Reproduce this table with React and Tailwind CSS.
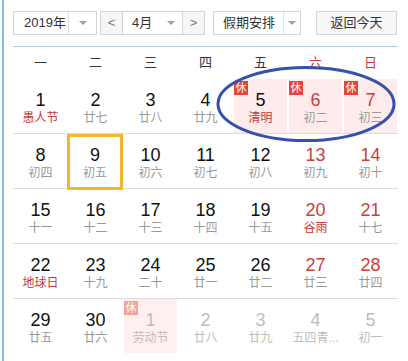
import React from 'react';

const RED = 'text-[#cc3d3d]';

// [day, lunar, flags]
const rows = [
  [
    [1, '愚人节', { lunarRed: true }],
    [2, '廿七'],
    [3, '廿八'],
    [4, '廿九'],
    [5, '清明', { rest: true, lunarRed: true }],
    [6, '初二', { rest: true, weekend: true }],
    [7, '初三', { rest: true, weekend: true }],
  ],
  [
    [8, '初四'],
    [9, '初五', { today: true }],
    [10, '初六'],
    [11, '初七'],
    [12, '初八'],
    [13, '初九', { weekend: true }],
    [14, '初十', { weekend: true }],
  ],
  [
    [15, '十一'],
    [16, '十二'],
    [17, '十三'],
    [18, '十四'],
    [19, '十五'],
    [20, '谷雨', { weekend: true, lunarRed: true }],
    [21, '十七', { weekend: true }],
  ],
  [
    [22, '地球日', { lunarRed: true }],
    [23, '十九'],
    [24, '二十'],
    [25, '廿一'],
    [26, '廿二'],
    [27, '廿三', { weekend: true }],
    [28, '廿四', { weekend: true }],
  ],
  [
    [29, '廿五'],
    [30, '廿六'],
    [1, '劳动节', { rest: true, other: true }],
    [2, '廿八', { other: true }],
    [3, '廿九', { other: true }],
    [4, '五四青...', { other: true }],
    [5, '初一', { other: true }],
  ],
];

const weekdays = ['一', '二', '三', '四', '五', '六', '日'];

const Caret = () => (
  <span className="w-0 h-0 border-l-[4px] border-r-[4px] border-t-[4px] border-l-transparent border-r-transparent border-t-[#a0a0a0]" />
);

const DayCell = ({ day, lunar, flags = {} }) => {
  const { rest, weekend, lunarRed, today, other } = flags;

  let numColor = 'text-[#111]';
  if (weekend) numColor = RED;
  if (other) numColor = 'text-[#bdbdbd]';

  let lunarColor = 'text-[#999]';
  if (lunarRed) lunarColor = 'text-[#c23a3a]';
  if (other) lunarColor = 'text-[#bdbdbd]';

  if (today) {
    return (
      <div className="relative z-10 w-[56px] h-[56px] -ml-[1px] border-[3px] border-[#f2b630] flex flex-col items-center pt-[8px]">
        <span className={`text-[18px] leading-[20px] ${numColor}`}>{day}</span>
        <span className={`text-[12px] leading-[16px] ${lunarColor}`}>{lunar}</span>
      </div>
    );
  }

  return (
    <div className="relative w-[55px] h-[54px] flex">
      <div
        className={`relative flex-1 flex flex-col items-center pt-[11px] ${
          rest ? (other ? 'bg-[#fdf0ee] mx-[1px]' : 'bg-[#fdeceb] mx-[1px]') : ''
        }`}
      >
        {rest && (
          <span
            className={`absolute top-[2px] left-0 w-[14px] h-[14px] flex items-center justify-center text-[11px] leading-none text-white ${
              other ? 'bg-[#f2a59d]' : 'bg-[#e5463a]'
            }`}
          >
            休
          </span>
        )}
        <span className={`text-[18px] leading-[20px] ${numColor}`}>{day}</span>
        <span className={`text-[12px] leading-[16px] whitespace-nowrap ${lunarColor}`}>{lunar}</span>
      </div>
    </div>
  );
};

export default function App() {
  return (
    <div
      className="relative w-[408px] h-[361px] bg-white overflow-hidden flex"
      style={{ fontFamily: '"Liberation Sans", "Noto Sans CJK SC", sans-serif' }}
    >
      <div className="ml-[2px] w-[2px] bg-[#86bcdc] self-stretch" />

      <div className="pl-[9px] flex flex-col">
        {/* controls */}
        <div className="mt-[11px] h-[24px] flex text-[13px] text-[#333]">
          <div className="w-[84px] flex border border-[#d4d4d4] bg-white">
            <div className="w-[54px] flex items-center pl-[10px]">2019年</div>
            <div className="flex-1 border-l border-[#e2e2e2] flex items-center justify-center">
              <Caret />
            </div>
          </div>

          <div className="ml-[3px] w-[105px] flex border border-[#d4d4d4]">
            <div className="w-[22px] bg-[#f6f6f6] flex items-center justify-center text-[#777] border-r border-[#d4d4d4]">&lt;</div>
            <div className="flex-1 flex">
              <div className="flex-1 flex items-center pl-[9px]">4月</div>
              <div className="w-[22px] flex items-center justify-center">
                <Caret />
              </div>
            </div>
            <div className="w-[22px] bg-[#f6f6f6] flex items-center justify-center text-[#777] border-l border-[#d4d4d4]">&gt;</div>
          </div>

          <div className="ml-[8px] w-[88px] flex border border-[#d4d4d4]">
            <div className="w-[69px] flex items-center pl-[9px]">假期安排</div>
            <div className="flex-1 border-l border-[#e2e2e2] flex items-center justify-center">
              <Caret />
            </div>
          </div>

          <div className="ml-[15px] w-[81px] flex items-center justify-center border border-[#d4d4d4] bg-[#f7f7f7]">
            返回今天
          </div>
        </div>

        <div className="mt-[11px] w-[385px] border-t border-[#a9cbe0]" />

        {/* week header */}
        <div className="flex h-[32px] items-center text-[13px]">
          {weekdays.map((w, i) => (
            <div key={w} className={`w-[55px] text-center ${i >= 5 ? RED : 'text-[#333]'}`}>
              {w}
            </div>
          ))}
        </div>

        {/* days */}
        {rows.map((row, ri) => (
          <div key={ri} className={`flex w-[385px] h-[55px] ${ri < 4 ? 'border-b border-[#dcdcdc]' : ''}`}>
            {row.map(([d, l, f], ci) => (
              <DayCell key={ci} day={d} lunar={l} flags={f} />
            ))}
          </div>
        ))}
      </div>

      {/* hand-drawn annotation */}
      <svg className="absolute left-[215px] top-[64px] pointer-events-none" width="182" height="80" viewBox="0 0 182 80">
        <ellipse cx="91" cy="40" rx="88" ry="36.5" fill="none" stroke="#3550ad" strokeWidth="3" />
      </svg>
    </div>
  );
}
